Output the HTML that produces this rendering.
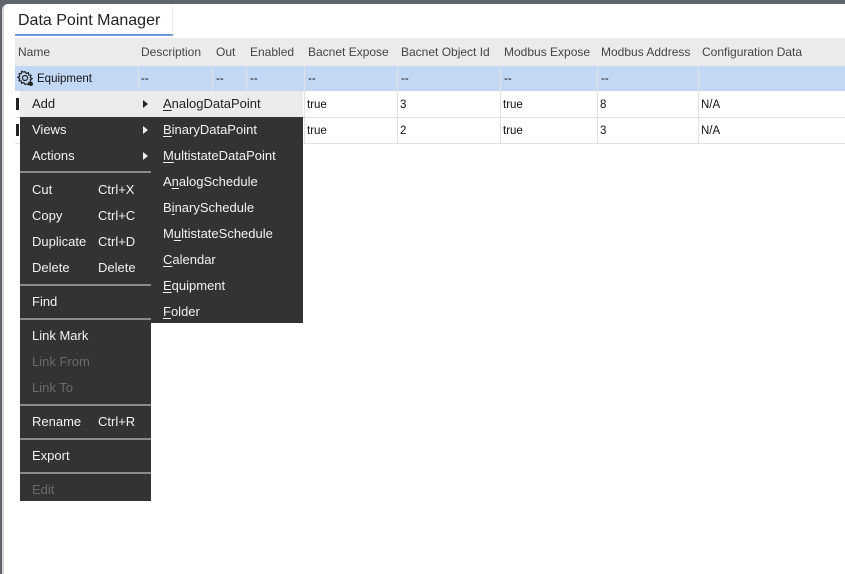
<!DOCTYPE html>
<html><head><meta charset="utf-8"><style>
*{margin:0;padding:0;box-sizing:border-box}
body{width:845px;height:566px;overflow:hidden;background:#5f636a;font-family:"Liberation Sans",sans-serif;position:relative}
.panel{position:absolute;left:2px;top:4px;width:850px;height:570px;background:#fff;border-radius:6px 0 0 0;border-left:2px solid #d8d8d8}
.a{position:absolute;white-space:nowrap}
.tab{left:18px;top:12px;font-size:16px;color:#222}
.tabline{left:15px;top:34px;width:158px;height:2px;background:#6b9bd8}
.tabr{left:172px;top:6px;width:1px;height:30px;background:#ececec}
.hdr{left:15px;top:38px;width:830px;height:28px;background:#ebebeb}
.h{font-size:12px;color:#444;top:45px}
.sel{left:15px;top:66px;width:830px;height:25px;background:#c3d8f5}
.c{font-size:11.5px;color:#111}
.vl{position:absolute;width:1px;background:#e2e2e2}
.hl{position:absolute;height:1px;background:#e2e2e2;left:15px;width:830px}
.menu{left:20px;top:91px;width:131px;height:410px;background:#333}
.sub{left:151px;top:91px;width:152px;height:232px;background:#333}
.addrow{left:20px;top:91px;width:283px;height:26px;background:#ebebeb}
.m{font-size:13px;color:#f2f2f2}
.dis{color:#6a6a6a}
.sep{position:absolute;left:20px;width:131px;height:2px;background:#8a8a8a}
.arr{width:0;height:0;border-left:5px solid #eee;border-top:4px solid transparent;border-bottom:4px solid transparent}
u{text-decoration:underline;text-underline-offset:2px}
</style></head><body>
<div class="panel"></div>
<div class="a tabr"></div>
<div class="a tab">Data Point Manager</div>
<div class="a tabline"></div>
<div class="a hdr"></div>
<div class="a h" style="left:18px">Name</div>
<div class="a h" style="left:141px">Description</div>
<div class="a h" style="left:216px">Out</div>
<div class="a h" style="left:250px">Enabled</div>
<div class="a h" style="left:308px">Bacnet Expose</div>
<div class="a h" style="left:401px">Bacnet Object Id</div>
<div class="a h" style="left:504px">Modbus Expose</div>
<div class="a h" style="left:601px">Modbus Address</div>
<div class="a h" style="left:702px">Configuration Data</div>
<div class="a sel"></div>
<div class="hl" style="top:117px"></div>
<div class="hl" style="top:143px"></div>
<div class="vl" style="left:138px;top:66px;height:77px"></div>
<div class="vl" style="left:212px;top:66px;height:77px"></div>
<div class="vl" style="left:246px;top:66px;height:77px"></div>
<div class="vl" style="left:304px;top:66px;height:77px"></div>
<div class="vl" style="left:397px;top:66px;height:77px"></div>
<div class="vl" style="left:500px;top:66px;height:77px"></div>
<div class="vl" style="left:597px;top:66px;height:77px"></div>
<div class="vl" style="left:698px;top:66px;height:77px"></div>
<svg class="a" style="left:17px;top:70px" width="17" height="17" viewBox="0 0 17 17"><g fill="none" stroke="#222" stroke-width="1.2"><circle cx="8" cy="8" r="2.5"/><path d="M8 1.5l1.2 2 2.2-.8.3 2.3 2.3.3-.8 2.2 2 1.2-2 1.2.8 2.2-2.3.3-.3 2.3-2.2-.8L8 14.5l-1.2-2-2.2.8-.3-2.3-2.3-.3.8-2.2-2-1.2 2-1.2-.8-2.2 2.3-.3.3-2.3 2.2.8z"/></g><circle cx="14" cy="14" r="2" fill="#222"/></svg>
<div class="a c" style="left:37px;top:73px">Equipment</div>
<div class="a c" style="left:141px;top:73px">--</div>
<div class="a c" style="left:216px;top:73px">--</div>
<div class="a c" style="left:250px;top:73px">--</div>
<div class="a c" style="left:308px;top:73px">--</div>
<div class="a c" style="left:401px;top:73px">--</div>
<div class="a c" style="left:504px;top:73px">--</div>
<div class="a c" style="left:601px;top:73px">--</div>
<div class="a c" style="left:307px;top:99px">true</div>
<div class="a c" style="left:400px;top:99px">3</div>
<div class="a c" style="left:503px;top:99px">true</div>
<div class="a c" style="left:600px;top:99px">8</div>
<div class="a c" style="left:701px;top:99px">N/A</div>
<div class="a c" style="left:307px;top:125px">true</div>
<div class="a c" style="left:400px;top:125px">2</div>
<div class="a c" style="left:503px;top:125px">true</div>
<div class="a c" style="left:600px;top:125px">3</div>
<div class="a c" style="left:701px;top:125px">N/A</div>
<div class="a" style="left:16px;top:98px;width:3px;height:12px;background:#222"></div>
<div class="a" style="left:16px;top:124px;width:3px;height:12px;background:#222"></div>

<div class="a menu"></div>
<div class="a sub"></div>
<div class="a addrow"></div>
<div class="a m" style="left:32px;top:96px;color:#222">Add</div>
<div class="a arr" style="left:143px;top:100px;border-left-color:#222"></div>
<div class="a m" style="left:163px;top:96px;color:#222"><u>A</u>nalogDataPoint</div>
<div class="a m" style="left:32px;top:122px">Views</div>
<div class="a arr" style="left:143px;top:126px"></div>
<div class="a m" style="left:32px;top:148px">Actions</div>
<div class="a arr" style="left:143px;top:152px"></div>
<div class="sep" style="top:171px"></div>
<div class="a m" style="left:32px;top:182px">Cut</div><div class="a m" style="left:98px;top:182px">Ctrl+X</div>
<div class="a m" style="left:32px;top:208px">Copy</div><div class="a m" style="left:98px;top:208px">Ctrl+C</div>
<div class="a m" style="left:32px;top:234px">Duplicate</div><div class="a m" style="left:98px;top:234px">Ctrl+D</div>
<div class="a m" style="left:32px;top:260px">Delete</div><div class="a m" style="left:98px;top:260px">Delete</div>
<div class="sep" style="top:284px"></div>
<div class="a m" style="left:32px;top:294px">Find</div>
<div class="sep" style="top:318px"></div>
<div class="a m" style="left:32px;top:328px">Link Mark</div>
<div class="a m dis" style="left:32px;top:354px">Link From</div>
<div class="a m dis" style="left:32px;top:380px">Link To</div>
<div class="sep" style="top:404px"></div>
<div class="a m" style="left:32px;top:414px">Rename</div><div class="a m" style="left:98px;top:414px">Ctrl+R</div>
<div class="sep" style="top:438px"></div>
<div class="a m" style="left:32px;top:448px">Export</div>
<div class="sep" style="top:472px"></div>
<div class="a m dis" style="left:32px;top:482px">Edit</div>

<div class="a m" style="left:163px;top:122px"><u>B</u>inaryDataPoint</div>
<div class="a m" style="left:163px;top:148px"><u>M</u>ultistateDataPoint</div>
<div class="a m" style="left:163px;top:174px">A<u>n</u>alogSchedule</div>
<div class="a m" style="left:163px;top:200px">B<u>i</u>narySchedule</div>
<div class="a m" style="left:163px;top:226px">M<u>u</u>ltistateSchedule</div>
<div class="a m" style="left:163px;top:252px"><u>C</u>alendar</div>
<div class="a m" style="left:163px;top:278px"><u>E</u>quipment</div>
<div class="a m" style="left:163px;top:304px"><u>F</u>older</div>
</body></html>
